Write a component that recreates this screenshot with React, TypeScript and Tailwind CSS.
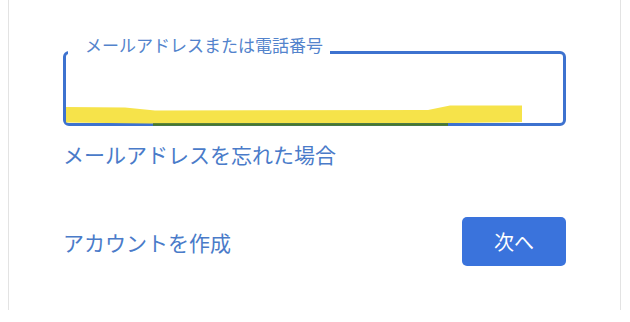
export default function App() {
  return (
    <div
      className="w-[630px] h-[322px] bg-white overflow-hidden"
      style={{ fontFamily: '"Noto Sans CJK JP", "Noto Sans", sans-serif' }}
    >
      <div className="ml-[8px] w-[613px] h-[310px] border-x border-[#e3e3e3] px-[54px] pt-[51px] flex flex-col">
        {/* email input */}
        <div className="relative h-[75px] border-[3px] border-[#3d72cf] rounded-[6px]">
          <span className="absolute left-[2px] top-[-19px] bg-white pl-[17px] pr-[7px] text-[17px] leading-[20px] text-[#5383cc]">
            メールアドレスまたは電話番号
          </span>
          <svg
            className="absolute left-[-3px] top-[-3px] pointer-events-none"
            width="501"
            height="75"
            viewBox="0 0 501 75"
            overflow="visible"
          >
            <polygon
              points="3,56 62,56.5 92,59.5 365,59 387,54.5 459,54.5 459,71 387,72 87,72.5 3,71.5"
              fill="#f6e34a"
            />
            <line x1="90" y1="73.5" x2="385" y2="73.5" stroke="#4b7a22" strokeWidth="2.5" />
          </svg>
        </div>

        <a className="mt-[14px] self-start text-[21px] leading-[28px] text-[#4a7bc9]">
          メールアドレスを忘れた場合
        </a>

        <div className="mt-[49px] flex items-center justify-between">
          <a className="text-[21px] leading-[28px] text-[#4a7bc9]">アカウントを作成</a>
          <button className="w-[104px] h-[49px] rounded-[5px] bg-[#3a73dc] text-white text-[20px] leading-none">
            次へ
          </button>
        </div>
      </div>
    </div>
  );
}
